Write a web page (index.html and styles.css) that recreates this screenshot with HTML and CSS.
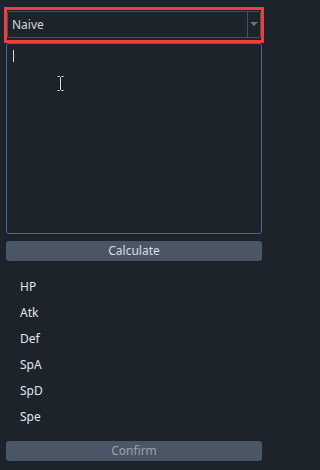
FILE: index.html
```html
<!DOCTYPE html>
<html>
<head>
<meta charset="utf-8">
<link rel="stylesheet" href="styles.css">
</head>
<body>
<div class="app">
  <div class="highlight">
    <div class="combo">
      <span class="combo-text">Naive</span>
      <span class="combo-btn">
        <svg width="8" height="5" viewBox="0 0 8 5"><path d="M0 0H8L4 4Z" fill="#6a737e"/></svg>
      </span>
    </div>
  </div>
  <div class="editor">
    <span class="caret"></span>
    <svg class="ibeam" width="7" height="15" viewBox="0 0 7 15">
      <path d="M0.5 0.5H2.5L3.5 1.5L4.5 0.5H6.5M3.5 1.5V13.5M0.5 14.5H2.5L3.5 13.5L4.5 14.5H6.5M2 7.5H5" stroke="#111" stroke-width="2" fill="none"/>
      <path d="M0.5 0.5H2.5L3.5 1.5L4.5 0.5H6.5M3.5 1.5V13.5M0.5 14.5H2.5L3.5 13.5L4.5 14.5H6.5" stroke="#e8e8e8" stroke-width="1" fill="none"/>
    </svg>
  </div>
  <div class="btn">Calculate</div>
  <ul class="stats">
    <li>HP</li>
    <li>Atk</li>
    <li>Def</li>
    <li>SpA</li>
    <li>SpD</li>
    <li>Spe</li>
  </ul>
  <div class="btn disabled">Confirm</div>
</div>
</body>
</html>
```
FILE: styles.css
```css
html, body {
  margin: 0;
  padding: 0;
  background: #1c232b;
}
body {
  width: 270px;
  height: 470px;
  overflow: hidden;
  font-family: "Noto Sans", "Open Sans", sans-serif;
  font-size: 12px;
  color: #d4d9de;
}
.app {
  display: flex;
  flex-direction: column;
  padding: 7px 8px 0 6px;
}
.highlight {
  margin-left: -2px;
  margin-right: -2px;
  border: 3px solid #f03c3c;
  padding: 1px 0 2px 0;
}
.combo {
  height: 25px;
  border: 1px solid #46505b;
  border-radius: 2px;
  display: flex;
  align-items: center;
}
.combo-text {
  flex: 1;
  padding-left: 4px;
  color: #d2d7dc;
}
.combo-btn {
  width: 12px;
  height: 100%;
  border-left: 1px solid #46505b;
  display: flex;
  align-items: center;
  justify-content: center;
}
.editor {
  position: relative;
  height: 189px;
  border: 1px solid #3d6b9c;
  border-radius: 3px;
}
.caret {
  position: absolute;
  left: 6px;
  top: 6px;
  width: 1px;
  height: 12px;
  background: #d8dde2;
}
.ibeam {
  position: absolute;
  left: 50px;
  top: 32px;
}
.btn {
  margin-top: 7px;
  height: 20px;
  line-height: 20px;
  background: #4a5565;
  border-radius: 3px;
  text-align: center;
  color: #d8dde2;
}
.btn.disabled {
  color: #9aa3ad;
  margin-top: 11px;
}
.stats {
  list-style: none;
  margin: 13px 0 0 0;
  padding: 0 0 0 14px;
}
.stats li {
  height: 26px;
  line-height: 26px;
  color: #e4e7ea;
}
```
